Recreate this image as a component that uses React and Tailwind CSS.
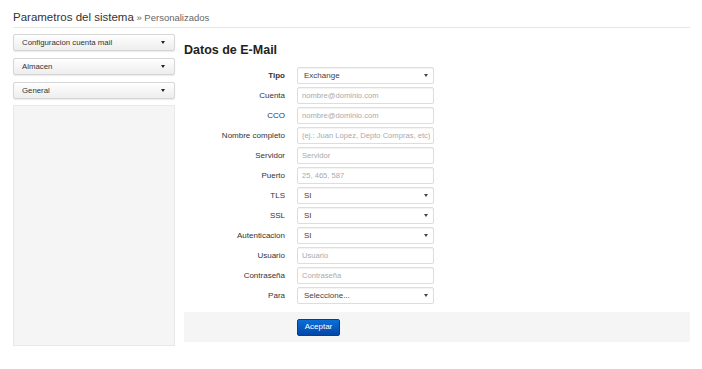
import React from 'react';

const rows = [
  { label: 'Tipo', type: 'select', value: 'Exchange', bold: true },
  { label: 'Cuenta', placeholder: 'nombre@dominio.com' },
  { label: 'CCO', placeholder: 'nombre@dominio.com' },
  { label: 'Nombre completo', placeholder: '(ej.: Juan Lopez, Depto Compras, etc)' },
  { label: 'Servidor', placeholder: 'Servidor' },
  { label: 'Puerto', placeholder: '25, 465, 587' },
  { label: 'TLS', type: 'select', value: 'SI' },
  { label: 'SSL', type: 'select', value: 'SI' },
  { label: 'Autenticacion', type: 'select', value: 'SI' },
  { label: 'Usuario', placeholder: 'Usuario' },
  { label: 'Contraseña', placeholder: 'Contraseña' },
  { label: 'Para', type: 'select', value: 'Seleccione...' },
];

const SideButton = ({ children }) => (
  <div className="h-[17px] flex items-center justify-between pl-[8px] pr-[9px] border border-[#d6d6d6] rounded-[2px] bg-gradient-to-b from-white to-[#ededed] shadow-[0_1px_1px_rgba(0,0,0,0.08)] text-[7.8px] text-[#333]">
    <span>{children}</span>
    <span className="w-0 h-0 border-l-[2.5px] border-r-[2.5px] border-t-[3px] border-l-transparent border-r-transparent border-t-[#222]"></span>
  </div>
);

const Field = ({ row }) => (
  <div className="flex items-center h-[17px] mb-[3px]">
    <div className={`w-[101px] text-right text-[8px] text-[#333] ${row.bold ? 'font-bold' : ''}`}>
      {row.label}
    </div>
    <div className="ml-[12px] w-[137px] h-[17px] border border-[#ddd] rounded-[2px] bg-white shadow-[inset_0_1px_1px_rgba(0,0,0,0.05)] flex items-center justify-between pl-[4px] pr-[5px] text-[7.6px] overflow-hidden">
      {row.type === 'select' ? (
        <>
          <span className="text-[#444] pl-[2px] text-[8px]">{row.value}</span>
          <span className="w-0 h-0 border-l-[2px] border-r-[2px] border-t-[3.5px] border-l-transparent border-r-transparent border-t-[#444]"></span>
        </>
      ) : (
        <span className="text-[#aaa] whitespace-nowrap">{row.placeholder}</span>
      )}
    </div>
  </div>
);

export default function App() {
  return (
    <div className="w-[702px] h-[369px] bg-white pl-[13px] pr-[12px] pt-[9px] font-['Liberation_Sans',Arial,sans-serif] overflow-hidden">
      {/* Encabezado */}
      <div className="border-b border-[#e6e6e6] pb-[2px] leading-[14px]">
        <span className="text-[11.5px] text-[#333]">Parametros del sistema</span>
        <span className="text-[9.5px] text-[#666]"> » Personalizados</span>
      </div>

      <div className="flex mt-[6px]">
        {/* Sidebar */}
        <div className="w-[162px] flex flex-col gap-[7px]">
          <SideButton>Configuracion cuenta mail</SideButton>
          <SideButton>Almacen</SideButton>
          <SideButton>General</SideButton>
          <div className="h-[241px] -mt-[1px] bg-[#f5f5f5] border border-[#e8e8e8]"></div>
        </div>

        {/* Contenido */}
        <div className="flex-1 ml-[9px]">
          <h2 className="text-[12.5px] font-bold text-[#222] mt-[9px] mb-[9px] leading-[15px]">Datos de E-Mail</h2>
          {rows.map((row) => (
            <Field key={row.label} row={row} />
          ))}
          <div className="mt-[8px] h-[30px] bg-[#f5f5f5] flex items-center pl-[113px]">
            <button className="h-[17px] w-[43px] rounded-[2px] bg-gradient-to-b from-[#0b6fd8] to-[#0447a8] border border-[#043f96] text-white text-[8px]">
              Aceptar
            </button>
          </div>
        </div>
      </div>
    </div>
  );
}
